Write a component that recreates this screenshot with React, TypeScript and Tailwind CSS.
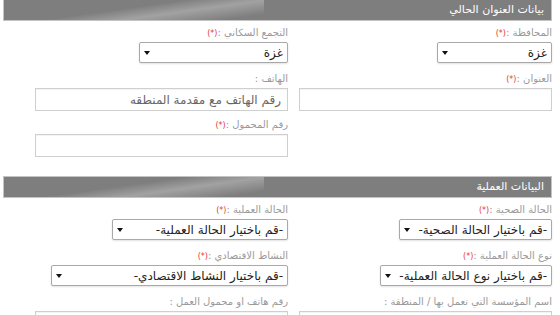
import React from 'react';

function Label({ text, req }: { text: string; req?: boolean }) {
  return (
    <div className="h-[16px] whitespace-nowrap text-[10px] leading-[14px] text-[#9a9a9a]">
      {text}
      {req && <span className="text-[8px] text-[#e53935]">(*)</span>}
    </div>
  );
}

function Select({ value, className }: { value: string; className: string }) {
  return (
    <div
      className={
        'flex h-[21px] items-center justify-between gap-[6px] rounded-[2px] border border-[#a9a9a9] bg-white pr-[4px] pl-[4px] text-[12px] text-[#222] shadow-[0_1px_2px_rgba(0,0,0,0.12)] ' +
        className
      }
    >
      <span className="whitespace-nowrap leading-none">{value}</span>
      <svg width="6" height="4" viewBox="0 0 6 4" className="mr-[2px] shrink-0">
        <polygon points="0,0 6,0 3,4" fill="#111" />
      </svg>
    </div>
  );
}

function Input({ placeholder }: { placeholder?: string }) {
  return (
    <div className="flex h-[23px] w-full items-center border border-[#cfcfcf] bg-white px-[6px] text-[12px] text-[#666] shadow-[inset_0_1px_1px_rgba(0,0,0,0.05)]">
      {placeholder}
    </div>
  );
}

function SectionHeader({ title }: { title: string }) {
  return (
    <div className="flex h-[22px] items-center border border-[#c4c4c4] bg-[#7e7e7e] bg-[linear-gradient(172deg,transparent_0%,transparent_45%,rgba(255,255,255,0.28)_65%,transparent_90%)] bg-[length:260px_100%] bg-no-repeat pr-[7px] text-[11px] text-white">
      {title}
    </div>
  );
}

function Field({ children }: { children: React.ReactNode }) {
  return <div className="flex h-[46px] flex-col items-start">{children}</div>;
}

export default function App() {
  return (
    <div dir="rtl" className="h-[315px] w-[560px] overflow-hidden bg-white font-['DejaVu_Sans',sans-serif]">
      <div className="ml-[3px] mr-[8px] -mt-[1px]">
        <SectionHeader title="بيانات العنوان الحالي" />
      </div>
      <div className="grid grid-cols-2 gap-x-[11px] pt-[5px] pr-[8px] pl-[35px]">
        <div>
          <Field>
            <Label text="المحافظة :" req />
            <Select value="غزة" className="w-[115px]" />
          </Field>
          <Field>
            <Label text="العنوان :" req />
            <Input />
          </Field>
        </div>
        <div>
          <Field>
            <Label text="التجمع السكاني :" req />
            <Select value="غزة" className="w-[149px]" />
          </Field>
          <Field>
            <Label text="الهاتف :" />
            <Input placeholder="رقم الهاتف مع مقدمة المنطقه" />
          </Field>
          <Field>
            <Label text="رقم المحمول :" req />
            <Input />
          </Field>
        </div>
      </div>

      <div className="mt-[12px] ml-[3px] mr-[8px]">
        <SectionHeader title="البيانات العملية" />
      </div>
      <div className="grid grid-cols-2 gap-x-[11px] pt-[5px] pr-[8px] pl-[35px]">
        <div>
          <Field>
            <Label text="الحالة الصحية :" req />
            <Select value="-قم باختيار الحالة الصحية-" className="w-fit" />
          </Field>
          <Field>
            <Label text="نوع الحالة العملية :" req />
            <Select value="-قم باختيار نوع الحالة العملية-" className="w-fit" />
          </Field>
          <Field>
            <Label text="اسم المؤسسة التي تعمل بها / المنطقة :" />
            <Input />
          </Field>
        </div>
        <div>
          <Field>
            <Label text="الحالة العملية :" req />
            <Select value="-قم باختيار الحالة العملية-" className="w-[176px]" />
          </Field>
          <Field>
            <Label text="النشاط الاقتصادي :" req />
            <Select value="-قم باختيار النشاط الاقتصادي-" className="w-[237px]" />
          </Field>
          <Field>
            <Label text="رقم هاتف او محمول العمل :" />
            <Input />
          </Field>
        </div>
      </div>
    </div>
  );
}
